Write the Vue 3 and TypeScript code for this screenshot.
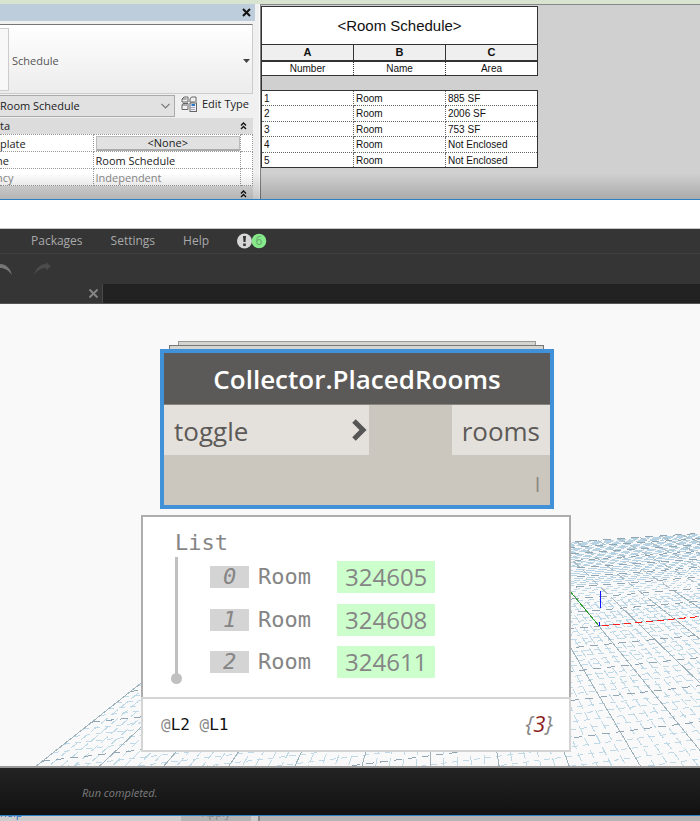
<script setup lang="ts">
interface RoomRow { id: number; name: string; area: string }
interface ListItem { index: number; label: string; elementId: string }
interface GridLine { key: string; x1: number; y1: number; x2: number; y2: number; kind: string }

const rooms: RoomRow[] = [
  { id: 1, name: 'Room', area: '885 SF' },
  { id: 2, name: 'Room', area: '2006 SF' },
  { id: 3, name: 'Room', area: '753 SF' },
  { id: 4, name: 'Room', area: 'Not Enclosed' },
  { id: 5, name: 'Room', area: 'Not Enclosed' },
]

const items: ListItem[] = [
  { index: 0, label: 'Room', elementId: '324605' },
  { index: 1, label: 'Room', elementId: '324608' },
  { index: 2, label: 'Room', elementId: '324611' },
]

const menus: string[] = ['Packages', 'Settings', 'Help']

// Perspective ground plane: origin plus one vanishing point per axis.
const origin = { x: 599, y: 322 }
const vanishU = { x: 3900, y: 14 }
const vanishV = { x: 448, y: 136 }
const farEdge = 45

function project(u: number, v: number): { x: number; y: number } {
  const a = u * 0.00234
  const b = v * 0.0173
  const w = 1 + a + b
  return {
    x: Math.round(((origin.x + a * vanishU.x + b * vanishV.x) / w) * 10) / 10,
    y: Math.round(((origin.y + a * vanishU.y + b * vanishV.y) / w) * 10) / 10,
  }
}

function segment(key: string, kind: string, u1: number, v1: number, u2: number, v2: number): GridLine {
  const p = project(u1, v1)
  const q = project(u2, v2)
  return { key, kind, x1: p.x, y1: p.y, x2: q.x, y2: q.y }
}

const lines: GridLine[] = []
for (let i = -50; i <= 50; i++) {
  const weight = i % 5 === 0 ? ' major' : ''
  lines.push(segment('near' + i, 'deep' + weight, i, 8, i, -42))
  lines.push(segment('far' + i, 'deep distant' + weight, i, farEdge, i, 8))
  if (i <= farEdge) {
    const distance = i > 14 ? ' distant' : ''
    lines.push(segment('across' + i, 'across' + distance + weight, -50, i, 50, i))
  }
}
lines.sort((m, n) => Number(m.kind.includes('major')) - Number(n.kind.includes('major')))
</script>

<template>
  <div class="screen">
    <section class="host">
      <aside class="props">
        <header class="props-title">
          <button class="plain" aria-label="Close">
            <svg width="9" height="9" viewBox="0 0 9 9"><path d="M1 1L8 8M8 1L1 8" stroke="#111" stroke-width="2" /></svg>
          </button>
        </header>
        <div class="family">
          <span class="thumb"></span>
          <span class="family-name">Schedule</span>
          <svg class="caret" width="7" height="4" viewBox="0 0 7 4"><path d="M0 0H7L3.500 4Z" fill="#444" /></svg>
        </div>
        <div class="type-row">
          <div class="picker">
            <select aria-label="Type"><option>Room Schedule</option></select>
            <svg width="9" height="6" viewBox="0 0 9 6"><path d="M.5 .8L4.500 4.800L8.500 .8" fill="none" stroke="#777" stroke-width="1.200" /></svg>
          </div>
          <button class="plain edit">
            <svg width="17" height="16" viewBox="0 0 17 16" fill="none" stroke="#666">
              <path d="M1 3L3 1H7V6H1ZM1 3H5.500M9 3L10.500 1H15V6M9 3V6H14M1 9L2 7.500H7V13.500H1ZM1 9H6" />
              <rect x="9" y="7" width="6.500" height="8.500" fill="#eef" />
              <path d="M10.500 9H14" stroke="#2577c8" stroke-width="2" />
              <path d="M10.500 11.500H14M10.500 13.500H14" stroke-dasharray="1 1" />
            </svg>
            <span>Edit Type</span>
          </button>
        </div>
        <div class="group">
          <span>ta</span>
          <svg width="7" height="8" viewBox="0 0 7 8"><path d="M1 3.500L3.500 1L6 3.500M1 7L3.500 4.500L6 7" fill="none" stroke="#111" stroke-width="1.300" /></svg>
        </div>
        <table class="params">
          <tbody>
            <tr><th>plate</th><td><button class="none">&lt;None&gt;</button></td><td></td></tr>
            <tr><th><span class="cut">ne</span></th><td><input aria-label="Name" value="Room Schedule"></td><td></td></tr>
            <tr class="dim"><th><span class="cut">ncy</span></th><td>Independent</td><td></td></tr>
          </tbody>
        </table>
        <div class="group">
          <span></span>
          <svg width="7" height="8" viewBox="0 0 7 8"><path d="M1 3.500L3.500 1L6 3.500M1 7L3.500 4.500L6 7" fill="none" stroke="#111" stroke-width="1.300" /></svg>
        </div>
      </aside>
      <div class="sheet">
        <table class="schedule">
          <thead>
            <tr class="caption"><th colspan="3">&lt;Room Schedule&gt;</th></tr>
            <tr class="letters"><th>A</th><th>B</th><th>C</th></tr>
            <tr class="names"><th>Number</th><th>Name</th><th>Area</th></tr>
          </thead>
          <tbody>
            <tr class="gap"><td colspan="3"></td></tr>
            <tr v-for="room in rooms" :key="room.id" class="room">
              <td>{{ room.id }}</td><td>{{ room.name }}</td><td>{{ room.area }}</td>
            </tr>
          </tbody>
        </table>
      </div>
    </section>

    <main class="app">
      <div class="titlebar"></div>
      <nav class="menu">
        <a v-for="menu in menus" :key="menu" href="#">{{ menu }}</a>
        <span class="badges">
          <svg width="30" height="16" viewBox="0 0 30 16">
            <circle cx="7.500" cy="8" r="7.500" fill="#d6d6d6" />
            <path d="M6 3H9L8.500 9H6.500Z" fill="#333" /><rect x="6.200" y="10.500" width="2.600" height="2.500" fill="#333" />
            <circle cx="22" cy="8" r="7.300" fill="#86ea8b" />
            <text x="22" y="12" text-anchor="middle" class="count">6</text>
          </svg>
        </span>
      </nav>
      <div class="tools">
        <button class="plain" aria-label="Undo">
          <svg width="13" height="14" viewBox="0 0 13 14"><path d="M0 2C6 2 10 6 12 13C8 8 5 6 0 6Z" fill="#777" /></svg>
        </button>
        <button class="plain" aria-label="Redo">
          <svg width="18" height="14" viewBox="0 0 18 14"><path d="M0 13C2 6 6 2 12 2V0L17 4.500L12 8.500V6C7 6 4 8 0 13Z" fill="#4b4b4b" /></svg>
        </button>
      </div>
      <div class="tabs">
        <div class="tab">
          <button class="plain" aria-label="Close tab">
            <svg width="9" height="9" viewBox="0 0 9 9"><path d="M.5 .5L8.500 8.500M8.500 .5L.5 8.500" stroke="#858585" stroke-width="2" /></svg>
          </button>
        </div>
      </div>

      <div class="canvas">
        <svg class="grid" viewBox="0 0 700 462" preserveAspectRatio="xMinYMin slice" shape-rendering="crispEdges">
          <line v-for="line in lines" :key="line.key" :x1="line.x1" :y1="line.y1" :x2="line.x2" :y2="line.y2" :class="line.kind" />
          <path d="M599 322L560 275" stroke="#35a035" />
          <path d="M600.500 287V304M599.500 318V322" stroke="#1414ff" />
          <path d="M602 322L700 312.500" stroke="#ff1c1c" stroke-dasharray="7 4" />
        </svg>

        <div class="graph">
          <div class="stack back"></div>
          <div class="stack front"></div>
          <article class="node">
            <h1>Collector.PlacedRooms</h1>
            <div class="ports">
              <div class="port in">
                <span>toggle</span>
                <svg width="15" height="22" viewBox="0 0 15 22"><path d="M2 2L11 11L2 20" fill="none" stroke="#555" stroke-width="5" /></svg>
              </div>
              <div class="port out">rooms</div>
            </div>
            <div class="lacing">l</div>
          </article>

          <section class="preview">
            <div class="list">
              <div class="list-title">List</div>
              <div class="tree">
                <div class="rail"></div>
                <ul>
                  <li v-for="item in items" :key="item.index">
                    <span class="index">{{ item.index }}</span>
                    <span class="label">{{ item.label }}</span>
                    <a class="element" href="#">{{ item.elementId }}</a>
                  </li>
                </ul>
              </div>
            </div>
            <footer>
              <span class="levels"><i>@</i>L2 <i>@</i>L1</span>
              <span class="total">{<b>3</b>}</span>
            </footer>
          </section>
        </div>
      </div>

      <div class="status">Run completed.</div>
    </main>

    <footer class="strip">
      <div class="strip-left">
        <a href="#">help</a>
        <button class="apply">Apply</button>
      </div>
      <div class="strip-right"></div>
    </footer>
  </div>
</template>

<style>
body { margin: 0; }
</style>

<style scoped>
* { box-sizing: border-box; }
.screen { display: flex; flex-direction: column; min-height: 100vh; font: 11px/16px "Open Sans", "Noto Sans", sans-serif; color: #222; overflow: hidden; background: #d8e4d0; }
.plain { border: 0; padding: 0; background: none; display: flex; align-items: center; font: inherit; color: inherit; white-space: nowrap; }
svg { display: block; flex: none; }

.host { position: relative; display: flex; height: 199px; padding-top: 4px; overflow: hidden; }
.host::after { content: ""; position: absolute; left: 0; right: 0; bottom: 0; height: 26px; background: linear-gradient(transparent, rgba(0, 0, 0, .18)); }
.props { width: 260px; flex: none; padding-right: 6px; background: #f0f0f0; border-right: 1px solid #fafafa; }
.props-title { height: 17px; background: #becddb; display: flex; justify-content: flex-end; align-items: center; padding-right: 4px; margin-bottom: 3px; margin-right: -2px; }
.family { height: 70px; display: flex; align-items: center; border: 1px solid #ccc; border-left: 0; border-top: 1px solid #777; background: linear-gradient(#fff, #ececec); padding-right: 2px; color: #555; }
.thumb { width: 9px; height: 63px; border: 1px solid #ccc; border-left: 0; background: #f8f8f8; }
.family-name { padding: 4px 0 0 3px; flex: 1; }
.caret { margin-top: 3px; }
.type-row { display: flex; height: 24px; gap: 6px; padding-top: 1px; }
.picker { width: 175px; height: 22px; display: flex; align-items: center; border: 1px solid #aaa; border-left: 0; background: #e1e1e1; padding-right: 4px; }
.picker select { appearance: none; flex: 1; min-width: 0; border: 0; padding: 0; background: none; font: inherit; color: #222; }
.edit { gap: 4px; height: 18px; }
.group { height: 16px; display: flex; align-items: center; justify-content: space-between; background: #dcdcdc; padding-right: 6px; }
.params { width: 100%; border-collapse: collapse; table-layout: fixed; background: #fff; }
.params tr { height: 17px; }
.params th, .params td { height: 17px; padding: 0; font-weight: 400; text-align: left; line-height: 15px; border: 1px dotted #999; white-space: nowrap; }
.params th { width: 93px; border-left: 0; }
.params td { padding-left: 2px; }
.params td:last-child { width: 12px; }
.cut { margin-left: -4px; }
.params .dim { color: #888; }
.none { display: block; width: 100%; height: 15px; padding: 0; border: 1px solid #bbb; border-bottom: 2px solid #aaa; background: #e1e1e1; font: inherit; line-height: 12px; color: #222; }
.params input { display: block; width: 100%; height: 15px; border: 0; padding: 0; background: none; font: inherit; color: #222; }

.sheet { flex: 1; background: #d0d0d0; border-left: 1px solid #808080; border-top: 1px solid #888; padding-top: 1px; }
.schedule { width: 277px; table-layout: fixed; border-collapse: collapse; font: 10px/13px "Liberation Sans", Arial, sans-serif; color: #111; }
.schedule th, .schedule td { padding: 0; font-weight: 400; background: #fff; border: 1px solid #333; }
.schedule .caption { height: 38px; }
.schedule .caption th { font-size: 15px; }
.schedule .letters { height: 16px; }
.schedule .letters th { font-weight: 700; font-size: 11px; background: #efefef; border-bottom-width: 2px; }
.schedule .names { height: 15px; }
.schedule .names th { border-left-style: dotted; border-right-style: dotted; }
.schedule .gap { height: 15px; }
.schedule .gap td { background: #d0d0d0; border-right: 0; }
.schedule .room { height: 15px; }
.schedule .room:nth-child(odd) { height: 16px; }
.schedule .room td { padding-left: 2px; border: 1px dotted #666; }
.schedule tr th:first-child, .schedule tr td:first-child { border-left: 1px solid #333; }
.schedule tr th:last-child, .schedule .room td:last-child { border-right: 1px solid #333; }
.schedule .room:last-child td { border-bottom: 1px solid #333; }

.app { flex: 1; display: flex; flex-direction: column; border-top: 1px solid #2b7fc4; border-bottom: 1px solid #2b7fc4; }
.titlebar { height: 29px; background: #fff; border-bottom: 1px solid #c4c8c4; }
.menu { height: 25px; display: flex; align-items: center; gap: 28px; padding-left: 31px; background: #353535; border-bottom: 1px solid #404040; font-size: 12px; }
.menu a { color: #a9a9a9; text-decoration: none; }
.count { font: 12px "Open Sans", sans-serif; fill: #67a86a; }
.tools { height: 30px; display: flex; align-items: center; gap: 21px; background: #353535; }
.tabs { height: 20px; display: flex; background: #222; border-bottom: 1px solid #555; }
.tab { width: 103px; display: flex; justify-content: flex-end; align-items: center; padding-right: 4px; background: #353535; border-right: 1px solid #484848; }

.canvas { position: relative; flex: 1; background: #f9f9f9; overflow: hidden; padding-top: 37px; padding-left: 141px; }
.grid { position: absolute; left: 0; top: 0; width: 100%; height: 100%; }
.grid line { stroke-width: 1; }
.deep { stroke: #bfd9e6; stroke-dasharray: 9 4; }
.deep.major { stroke: #9fb3bd; stroke-dasharray: none; }
.deep.distant { stroke: #f9f9f9; stroke-dasharray: 5 3; }
.deep.distant.major { stroke: #a9bbc5; stroke-dasharray: 8 5; }
.across { stroke: #bfd9e8; stroke-dasharray: 6 5; }
.across.distant { stroke: #b7d2e2; stroke-dasharray: 9 3; }
.across.major { stroke: #91a6b2; stroke-dasharray: 8 6; }

.graph { position: relative; width: 430px; }
.stack { height: 4px; border: 1px solid #999; border-bottom: 0; background: #d4d4d0; }
.back { margin: 0 35px 0 37px; }
.front { margin: 0 27px 0 28px; border-color: #777; }
.node { margin: 0 17px 6px 19px; border: 4px solid #4191d9; background: #cbc6be; color: #5c5a58; }
.node h1 { margin: 0; height: 52px; font-size: 26px; line-height: 52px; font-weight: 600; text-align: center; color: #fff; background: #5c5a58; border-bottom: 1px solid #888580; }
.ports { display: flex; justify-content: space-between; height: 50px; font-size: 26px; line-height: 52px; }
.port { background: #e4e1dc; padding: 0 10px; }
.in { width: 205px; display: flex; justify-content: space-between; padding-right: 2px; }
.in svg { margin-top: 14px; }
.lacing { height: 50px; padding-right: 10px; text-align: right; font-size: 20px; line-height: 60px; color: #8b8781; }

.preview { border: 2px solid #d4d4d4; background: #fff; color: #858585; }
.list { height: 182px; margin: -2px -2px 0; padding: 12px 0 0 32px; border: 2px solid #adadad; border-bottom: 0; font-family: "DejaVu Sans Mono", "Liberation Mono", monospace; font-size: 22px; line-height: 28px; }
.list-title { height: 28px; }
.tree { display: flex; }
.rail { position: relative; width: 3px; height: 122px; background: #c0c0c0; }
.rail::after { content: ""; position: absolute; left: -4px; bottom: -5px; width: 11px; height: 11px; border-radius: 50%; background: #c0c0c0; }
.tree ul { margin: 4px 0 0 32px; padding: 0; list-style: none; display: grid; gap: 10px; }
.tree li { display: flex; align-items: center; height: 32px; }
.index { width: 39px; height: 22px; line-height: 22px; text-align: center; font-style: italic; background: #d4d4d4; }
.label { width: 79px; margin-left: 9px; }
.element { height: 32px; padding: 0 8px; line-height: 32px; font-family: "Open Sans", sans-serif; font-size: 24px; color: #858585; text-decoration: none; background: #ccffcc; }
.preview footer { height: 53px; display: flex; justify-content: space-between; align-items: center; padding: 0 16px 0 18px; border-top: 2px solid #d4d4d4; }
.levels { font: 16px/20px "DejaVu Sans Mono", monospace; color: #111; }
.levels i { font-style: normal; color: #888; }
.total { font-size: 22px; line-height: 28px; padding-bottom: 4px; font-style: italic; }
.total b { font-weight: 400; color: #8b1a1a; }

.status { height: 49px; padding-left: 82px; line-height: 50px; font-style: italic; color: #7c7c7c; border-top: 2px solid #999; background: linear-gradient(#232323, #111); }

.strip { height: 5px; display: flex; overflow: hidden; background: #b4b4b4; }
.strip-left { width: 260px; flex: none; display: flex; align-items: flex-end; justify-content: space-between; padding-right: 7px; background: #ccc; border-right: 2px solid #888; }
.strip a { color: #2a6fc0; text-decoration: none; }
.apply { width: 70px; height: 16px; border: 0; padding: 0; background: #b4b4b4; color: #888; font: inherit; }
</style>
